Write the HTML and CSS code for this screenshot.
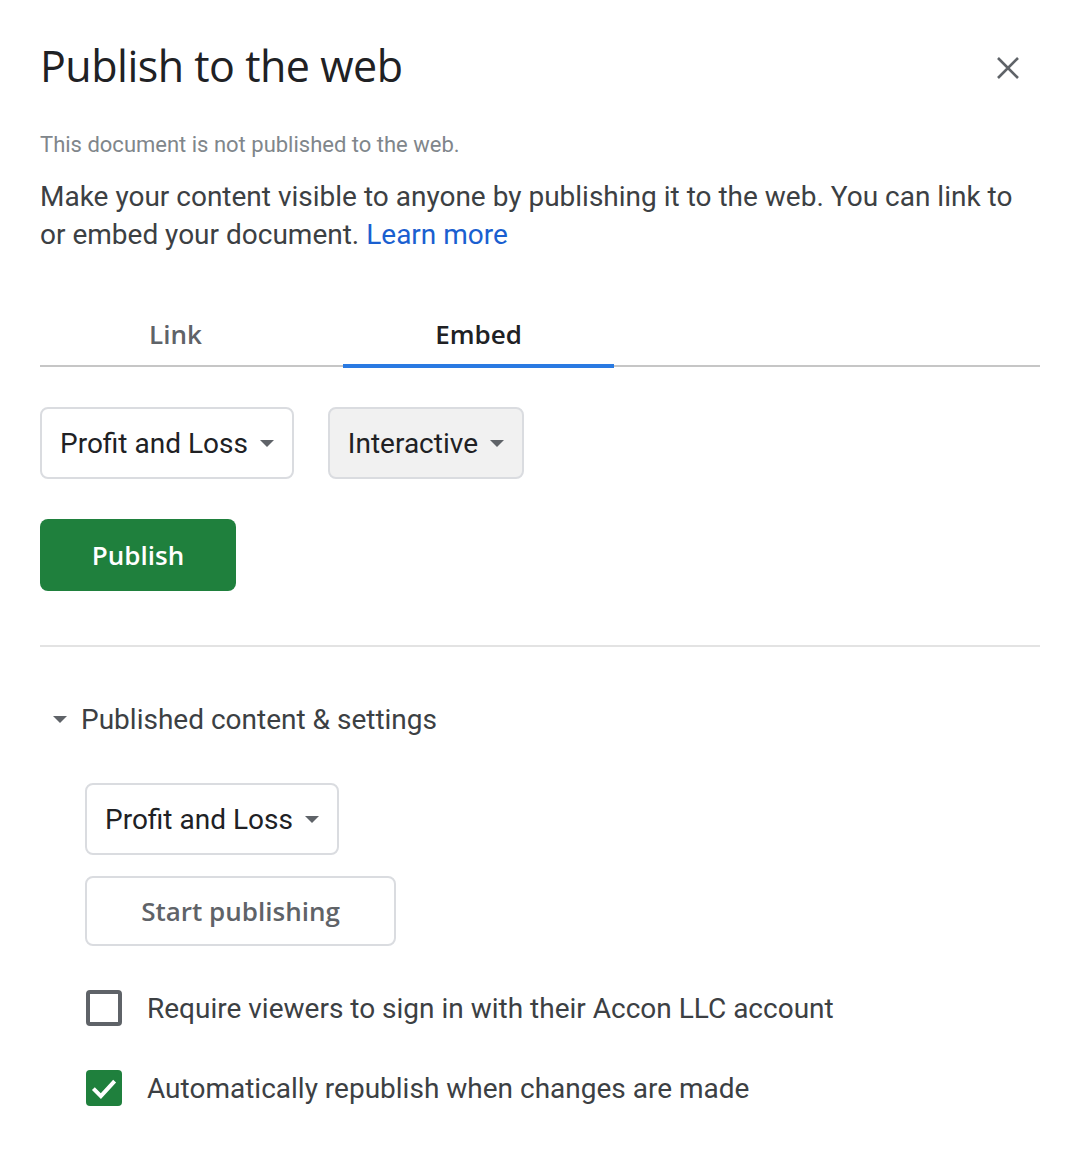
FILE: index.html
```html
<!DOCTYPE html>
<html lang="en">
<head>
  <meta charset="UTF-8" />
  <meta name="viewport" content="width=device-width, initial-scale=1" />
  <title>Publish to the web</title>
  <link rel="stylesheet" href="styles.css">
</head>
<body>
  <div class="dialog">
    <div class="dialog-head">
      <h1>Publish to the web</h1>
      <button class="btn-close" aria-label="Close">
        <svg width="24" height="24" viewBox="0 0 24 24">
          <path d="M2 2 L22 22 M22 2 L2 22" stroke="#5f6368" stroke-width="2.6" fill="none" />
        </svg>
      </button>
    </div>

    <p class="status">This document is not published to the web.</p>
    <p class="intro">Make your content visible to anyone by publishing it to the web. You can link to or embed your document. <a href="#">Learn more</a></p>

    <div class="tabs">
      <div class="tab">Link</div>
      <div class="tab active">Embed</div>
    </div>

    <div class="options">
      <div class="select">Profit and Loss <span class="caret"></span></div>
      <div class="select select-grey">Interactive <span class="caret"></span></div>
    </div>

    <button class="btn-publish">Publish</button>

    <div class="divider"></div>

    <div class="settings">
      <div class="settings-title"><span class="caret"></span>Published content &amp; settings</div>
      <div class="settings-body">
        <div class="select">Profit and Loss <span class="caret"></span></div>
        <button class="btn-start">Start publishing</button>

        <label class="check">
          <span class="box"></span>
          Require viewers to sign in with their Accon LLC account
        </label>
        <label class="check">
          <span class="box checked">
            <svg width="30" height="30" viewBox="0 0 24 24">
              <path d="M3.5 12.5 L9.5 18.5 L20.5 6.5" stroke="#fff" stroke-width="3.2" fill="none" />
            </svg>
          </span>
          Automatically republish when changes are made
        </label>
      </div>
    </div>
  </div>
</body>
</html>
```

FILE: styles.css
```css
html, body {
  margin: 0;
  background: white;
  font-family: Roboto, Arial, sans-serif;
  color: #3c4043;
}
.dialog {
  padding: 24px 40px 40px;
}
.dialog-head {
  display: flex;
  justify-content: space-between;
  align-items: center;
}
h1 {
  margin: 0;
  font-family: "Open Sans", Roboto, sans-serif;
  font-weight: 400;
  font-size: 43px;
  line-height: 84px;
  color: #202124;
  letter-spacing: -0.5px;
}
.btn-close {
  background: none;
  border: none;
  padding: 0;
  margin-right: 20px;
  margin-top: 4px;
  width: 24px;
  height: 24px;
  cursor: pointer;
}
.status {
  margin: 22px 0 0;
  font-size: 22px;
  line-height: 30px;
  color: #80868b;
}
.intro {
  margin: 18px 0 0;
  font-size: 28px;
  line-height: 38px;
  color: #3c4043;
}
.intro a {
  color: #1a5fd0;
  text-decoration: none;
}
.tabs {
  display: flex;
  gap: 32px;
  margin-top: 50px;
  border-bottom: 2px solid #c6c6c6;
}
.tab {
  width: 271px;
  text-align: center;
  font-family: "Open Sans", Roboto, sans-serif;
  font-size: 26px;
  font-weight: 600;
  line-height: 60px;
  color: #5f6368;
  border-bottom: 4px solid transparent;
  margin-bottom: -3px;
}
.tab.active {
  color: #202124;
  border-bottom-color: #2a7ae2;
}
.options {
  display: flex;
  gap: 34px;
  margin-top: 40px;
}
.select {
  display: inline-flex;
  align-items: center;
  gap: 12px;
  height: 72px;
  box-sizing: border-box;
  padding: 0 18px;
  border: 2px solid #dadce0;
  border-radius: 8px;
  font-size: 28px;
  color: #202124;
  background: white;
}
.select-grey {
  background: #f1f1f1;
}
.caret {
  display: inline-block;
  width: 0;
  height: 0;
  border-left: 7px solid transparent;
  border-right: 7px solid transparent;
  border-top: 7px solid #5f6368;
}
.btn-publish {
  display: block;
  margin-top: 40px;
  width: 196px;
  height: 72px;
  border: none;
  border-radius: 8px;
  background: #1f803d;
  color: white;
  font-family: "Open Sans", Roboto, sans-serif;
  font-size: 26px;
  font-weight: 600;
  cursor: pointer;
}
.divider {
  margin-top: 54px;
  border-top: 2px solid #e3e3e3;
}
.settings-title {
  display: flex;
  align-items: center;
  gap: 14px;
  margin-top: 56px;
  padding-left: 13px;
  font-size: 28px;
  color: #3c4043;
}
.settings-body {
  display: flex;
  flex-direction: column;
  align-items: flex-start;
  padding-left: 45px;
  margin-top: 47px;
}
.btn-start {
  margin-top: 21px;
  width: 311px;
  height: 70px;
  border: 2px solid #dadce0;
  border-radius: 8px;
  background: white;
  color: #5f6368;
  font-family: "Open Sans", Roboto, sans-serif;
  font-size: 26px;
  font-weight: 600;
  cursor: pointer;
}
.check {
  display: flex;
  align-items: center;
  gap: 25px;
  margin-top: 44px;
  font-size: 28px;
  color: #3c4043;
}
.check + .check {
  margin-top: 44px;
}
.box {
  width: 36px;
  height: 36px;
  box-sizing: border-box;
  border: 4px solid #5f6368;
  border-radius: 4px;
  margin-left: 1px;
  display: flex;
  align-items: center;
  justify-content: center;
}
.box.checked {
  border: none;
  background: #1f803d;
}
```
